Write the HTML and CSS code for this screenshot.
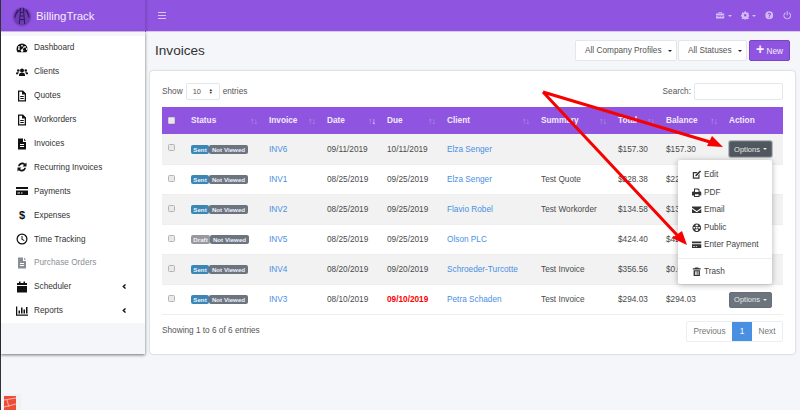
FILE: index.html
```html
<!DOCTYPE html>
<html>
<head>
    <title>BillingTrack - Invoices</title>
    <link rel="stylesheet" href="styles.css">
</head>
<body>
    <svg class="sprite" width="0" height="0">
        <symbol id="i-gauge" viewBox="0 0 24 24"><path fill-rule="evenodd" d="M12 3a11 11 0 0 0-11 11c0 2.400.8 4.700 2.100 6.500h17.800A11 11 0 0 0 23 14 11 11 0 0 0 12 3zm0 2.500a1.800 1.800 0 1 1 0 3.600 1.800 1.800 0 0 1 0-3.600zM6 8a1.800 1.800 0 1 1 0 3.600A1.800 1.800 0 0 1 6 8zm-2 6a1.800 1.800 0 1 1 0 .1zm14-6a1.800 1.800 0 1 1 0 3.600A1.800 1.800 0 0 1 18 8zm2 6a1.800 1.800 0 1 1 0 .1zM15.500 8.500l1.200.5-3 6.300a2.500 2.500 0 1 1-1.300-.6z"/></symbol>
        <symbol id="i-users" viewBox="0 0 24 24"><circle cx="12" cy="9" r="4"/><circle cx="4.500" cy="9" r="2.500"/><circle cx="19.500" cy="9" r="2.500"/><path d="M6 20v-2.500a4.500 4.500 0 0 1 4.500-4h3a4.500 4.500 0 0 1 4.500 4V20zM0 16.500V15a2.500 2.500 0 0 1 2.500-2.500H6a6 6 0 0 0-2 4zM24 16.500V15a2.500 2.500 0 0 0-2.500-2.500H18a6 6 0 0 1 2 4z"/></symbol>
        <symbol id="i-file" viewBox="0 0 24 24"><path fill-rule="evenodd" d="M4 1h10l6 6v16H4zm2.500 2.500v17h11V9H12V3.500zM8.500 12h7v2h-7zm0 4h7v2h-7z"/></symbol>
        <symbol id="i-filled" viewBox="0 0 24 24"><path fill-rule="evenodd" d="M4 1h10v7h6v15H4zm12 0l4 4.500h-4zM8 12v2h8v-2zm0 4v2h8v-2z"/></symbol>
        <symbol id="i-sync" viewBox="0 0 24 24"><path d="M4 10.500A8.500 8.500 0 0 1 18.300 5.400L21 3v8h-8l3-2.900A5.300 5.300 0 0 0 7.300 10.500zM20 13.500A8.500 8.500 0 0 1 5.700 18.600L3 21v-8h8l-3 2.900a5.300 5.300 0 0 0 8.700-2.400z"/></symbol>
        <symbol id="i-card" viewBox="0 0 24 24"><path fill-rule="evenodd" d="M0 4h24v4H0zm0 7h24v9H0zm3 4v2h5v-2zm7 0v2h3v-2z"/></symbol>
        <symbol id="i-clock" viewBox="0 0 24 24"><path fill-rule="evenodd" d="M12 1a11 11 0 1 0 0 22 11 11 0 0 0 0-22zm0 2.500a8.500 8.500 0 1 1 0 17 8.500 8.500 0 0 1 0-17zM11 6h2v6l4 2.500-1 1.700-5-3.100z"/></symbol>
        <symbol id="i-calendar" viewBox="0 0 24 24"><path d="M6 1h3v3h6V1h3v3h4v4H2V4h4zM2 10h20v13H2z"/></symbol>
        <symbol id="i-chart" viewBox="0 0 24 24"><path d="M0 3h2.500v16H24v2.500H0zM5 11h3v6H5zm5-6h3v12h-3zm5 4h3v8h-3zm5-5h3v13h-3z"/></symbol>
        <symbol id="i-chevron" viewBox="0 0 24 24"><path d="M16 2l4 4-7 6 7 6-4 4L5 12z"/></symbol>
        <symbol id="i-toolbox" viewBox="0 0 24 24"><path d="M8 3h8l1 4h7v6H0V7h7zm1.500 2l-.5 2h6l-.5-2zM0 15h7v2h3v-2h4v2h3v-2h7v6H0z"/></symbol>
        <symbol id="i-cog" viewBox="0 0 24 24"><path fill-rule="evenodd" d="M10 1h4l.6 3 2.200 1 2.600-1.700 2.800 2.800-1.700 2.600 1 2.200 3 .6v4l-3 .6-1 2.200 1.700 2.600-2.800 2.800-2.600-1.700-2.200 1-.6 3h-4l-.6-3-2.200-1-2.600 1.700-2.800-2.800 1.700-2.600-1-2.200-3-.6v-4l3-.6 1-2.200-1.700-2.600 2.800-2.800L7.200 5l2.200-1zM12 8.500a3.500 3.500 0 1 0 0 7 3.500 3.500 0 0 0 0-7z"/></symbol>
        <symbol id="i-help" viewBox="0 0 24 24"><path fill-rule="evenodd" d="M12 1a11 11 0 1 0 0 22 11 11 0 0 0 0-22zm-1.500 15.500h3v3h-3zm-3.500-7C7 7 9.200 5 12 5s5 1.800 5 4.300c0 3.200-3.500 3.200-3.500 5.700h-3c0-3.700 3.300-4 3.300-5.600 0-.9-.8-1.500-1.800-1.500-1.100 0-1.900.7-2 1.600z"/></symbol>
        <symbol id="i-power" viewBox="0 0 24 24"><path d="M10.500 1h3v11h-3zM7 3.500v3.300a7.800 7.800 0 1 0 10 0V3.500a10.800 10.800 0 1 1-10 0z"/></symbol>
        <symbol id="i-edit" viewBox="0 0 24 24"><path d="M2 5h12l-3 3H5v11h11v-6l3-3v12H2zM20 1l3 3-11 11-4 1 1-4z"/></symbol>
        <symbol id="i-print" viewBox="0 0 24 24"><path fill-rule="evenodd" d="M5 1h11l3 3v5h3l2 2v8h-5v4H5v-4H0v-8l2-2h3zm2.500 2.500V10h9V5h-2V3.500zm0 12.500v4.500h9V16z"/></symbol>
        <symbol id="i-mail" viewBox="0 0 24 24"><path d="M0 4h24v3l-12 8L0 7zM0 10l12 8 12-8v10H0z"/></symbol>
        <symbol id="i-globe" viewBox="0 0 24 24"><path fill-rule="evenodd" d="M12 1a11 11 0 1 0 0 22 11 11 0 0 0 0-22zM10 3.500C9 5 8.400 6.500 8.200 8h7.600C15.600 6.500 15 5 14 3.500zM3.800 10a8.500 8.500 0 0 0 0 4H8v-4zM10 10v4h4v-4zm6 0v4h4.200a8.500 8.500 0 0 0 0-4zM8.200 16c.2 1.500.8 3 1.800 4.500h4c1-1.500 1.600-3 1.800-4.500z"/></symbol>
        <symbol id="i-trash" viewBox="0 0 24 24"><path fill-rule="evenodd" d="M8 1h8l1 2h5v3H2V3h5zM4 8h16v15H4zm3.500 3v9h2v-9zm3.500 0v9h2v-9zm3.500 0v9h2v-9z"/></symbol>
    </svg>

    <div class="app">
        <header class="topbar">
            <div class="brand">
                <svg class="logo" viewBox="0 0 20 20">
                    <circle cx="10" cy="10" r="9.500" fill="#6d3bb4"/>
                    <path d="M7 19L8.500 1M13 19L11.500 1M7.600 14h4.800M8 10h4M8.300 6h3.400M8.500 2L2 9M11.500 2L18 9M5 3l-3 9M15 3l3 9" fill="none" stroke="#2a1650" stroke-width="1"/>
                </svg>
                <span class="brand-name">BillingTrack</span>
            </div>
            <div class="burger"><span></span><span></span><span></span></div>
            <div class="tools">
                <span class="tool"><svg class="ico"><use href="#i-toolbox"/></svg><i class="caret"></i></span>
                <span class="tool"><svg class="ico"><use href="#i-cog"/></svg><i class="caret"></i></span>
                <span class="tool"><svg class="ico"><use href="#i-help"/></svg></span>
                <span class="tool"><svg class="ico"><use href="#i-power"/></svg></span>
            </div>
        </header>

        <div class="content">
            <aside class="sidebar">
                <nav class="menu">
                    <a class="menu-item"><span class="menu-ico"><svg class="ico"><use href="#i-gauge"/></svg></span>Dashboard</a>
                    <a class="menu-item"><span class="menu-ico"><svg class="ico"><use href="#i-users"/></svg></span>Clients</a>
                    <a class="menu-item"><span class="menu-ico"><svg class="ico"><use href="#i-file"/></svg></span>Quotes</a>
                    <a class="menu-item"><span class="menu-ico"><svg class="ico"><use href="#i-file"/></svg></span>Workorders</a>
                    <a class="menu-item"><span class="menu-ico"><svg class="ico"><use href="#i-filled"/></svg></span>Invoices</a>
                    <a class="menu-item"><span class="menu-ico"><svg class="ico"><use href="#i-sync"/></svg></span>Recurring Invoices</a>
                    <a class="menu-item"><span class="menu-ico"><svg class="ico"><use href="#i-card"/></svg></span>Payments</a>
                    <a class="menu-item"><span class="menu-ico dollar">$</span>Expenses</a>
                    <a class="menu-item"><span class="menu-ico"><svg class="ico"><use href="#i-clock"/></svg></span>Time Tracking</a>
                    <a class="menu-item disabled"><span class="menu-ico"><svg class="ico"><use href="#i-filled"/></svg></span>Purchase Orders</a>
                    <a class="menu-item"><span class="menu-ico"><svg class="ico"><use href="#i-calendar"/></svg></span>Scheduler<svg class="chevron"><use href="#i-chevron"/></svg></a>
                    <a class="menu-item"><span class="menu-ico"><svg class="ico"><use href="#i-chart"/></svg></span>Reports<svg class="chevron"><use href="#i-chevron"/></svg></a>
                </nav>
            </aside>

            <main class="main">
                <div class="page-head">
                    <h1>Invoices</h1>
                    <div class="filters">
                        <div class="filter filter-company">All Company Profiles<i class="caret dark"></i></div>
                        <div class="filter filter-status">All Statuses<i class="caret dark"></i></div>
                        <button class="btn-new"><b>+</b> New</button>
                    </div>
                </div>

                <section class="card">
                    <div class="table-top">
                        <div class="length">Show <span class="length-select">10<span class="updown">&#9650;<br>&#9660;</span></span> entries</div>
                        <div class="search">Search: <span class="search-box"></span></div>
                    </div>

                    <table class="invoices">
                        <colgroup>
                            <col class="c-check"><col class="c-status"><col class="c-invoice"><col class="c-date"><col class="c-due"><col class="c-client"><col class="c-summary"><col class="c-total"><col class="c-balance"><col class="c-action">
                        </colgroup>
                        <thead>
                            <tr>
                                <th><span class="check head"></span></th>
                                <th>Status<span class="sort">&#8593;&#8595;</span></th>
                                <th>Invoice<span class="sort">&#8593;&#8595;</span></th>
                                <th>Date<span class="sort">&#8593;<em>&#8595;</em></span></th>
                                <th>Due<span class="sort">&#8593;&#8595;</span></th>
                                <th>Client<span class="sort">&#8593;&#8595;</span></th>
                                <th>Summary<span class="sort">&#8593;&#8595;</span></th>
                                <th>Total<span class="sort">&#8593;&#8595;</span></th>
                                <th>Balance<span class="sort">&#8593;&#8595;</span></th>
                                <th>Action</th>
                            </tr>
                        </thead>
                        <tbody>
                            <tr>
                                <td><span class="check"></span></td>
                                <td><span class="badge sent">Sent</span><span class="badge viewed">Not Viewed</span></td>
                                <td><a>INV6</a></td>
                                <td>09/11/2019</td>
                                <td>10/11/2019</td>
                                <td><a>Elza Senger</a></td>
                                <td></td>
                                <td>$157.30</td>
                                <td>$157.30</td>
                                <td class="action">
                                    <button class="btn-options focus">Options<i class="caret"></i></button>
                                    <div class="dropdown">
                                        <div class="drop-item"><svg class="ico"><use href="#i-edit"/></svg>Edit</div>
                                        <div class="drop-item"><svg class="ico"><use href="#i-print"/></svg>PDF</div>
                                        <div class="drop-item"><svg class="ico"><use href="#i-mail"/></svg>Email</div>
                                        <div class="drop-item"><svg class="ico"><use href="#i-globe"/></svg>Public</div>
                                        <div class="drop-item"><svg class="ico"><use href="#i-card"/></svg>Enter Payment</div>
                                        <div class="drop-line"></div>
                                        <div class="drop-item"><svg class="ico"><use href="#i-trash"/></svg>Trash</div>
                                    </div>
                                </td>
                            </tr>
                            <tr>
                                <td><span class="check"></span></td>
                                <td><span class="badge sent">Sent</span><span class="badge viewed">Not Viewed</span></td>
                                <td><a>INV1</a></td>
                                <td>08/25/2019</td>
                                <td>09/25/2019</td>
                                <td><a>Elza Senger</a></td>
                                <td>Test Quote</td>
                                <td>$228.38</td>
                                <td>$228.38</td>
                                <td class="action"><button class="btn-options"></button></td>
                            </tr>
                            <tr>
                                <td><span class="check"></span></td>
                                <td><span class="badge sent">Sent</span><span class="badge viewed">Not Viewed</span></td>
                                <td><a>INV2</a></td>
                                <td>08/25/2019</td>
                                <td>09/25/2019</td>
                                <td><a>Flavio Robel</a></td>
                                <td>Test Workorder</td>
                                <td>$134.58</td>
                                <td>$134.58</td>
                                <td class="action"><button class="btn-options"></button></td>
                            </tr>
                            <tr>
                                <td><span class="check"></span></td>
                                <td><span class="badge draft">Draft</span><span class="badge viewed">Not Viewed</span></td>
                                <td><a>INV5</a></td>
                                <td>08/25/2019</td>
                                <td>09/25/2019</td>
                                <td><a>Olson PLC</a></td>
                                <td></td>
                                <td>$424.40</td>
                                <td>$424.40</td>
                                <td class="action"><button class="btn-options"></button></td>
                            </tr>
                            <tr>
                                <td><span class="check"></span></td>
                                <td><span class="badge sent">Sent</span><span class="badge viewed">Not Viewed</span></td>
                                <td><a>INV4</a></td>
                                <td>08/20/2019</td>
                                <td>09/20/2019</td>
                                <td><a>Schroeder-Turcotte</a></td>
                                <td>Test Invoice</td>
                                <td>$356.56</td>
                                <td>$0.00</td>
                                <td class="action"><button class="btn-options"></button></td>
                            </tr>
                            <tr>
                                <td><span class="check"></span></td>
                                <td><span class="badge sent">Sent</span><span class="badge viewed">Not Viewed</span></td>
                                <td><a>INV3</a></td>
                                <td>08/10/2019</td>
                                <td class="overdue">09/10/2019</td>
                                <td><a>Petra Schaden</a></td>
                                <td>Test Invoice</td>
                                <td>$294.03</td>
                                <td>$294.03</td>
                                <td class="action"><button class="btn-options">Options<i class="caret"></i></button></td>
                            </tr>
                        </tbody>
                    </table>

                    <div class="table-bottom">
                        <div class="info">Showing 1 to 6 of 6 entries</div>
                        <div class="pager">
                            <span class="page prev">Previous</span>
                            <span class="page current">1</span>
                            <span class="page next">Next</span>
                        </div>
                    </div>
                </section>
            </main>
        </div>

        <!-- hand drawn annotation over the page -->
        <svg class="arrows" viewBox="0 0 800 410">
            <path d="M543 92L710 142M543 92L677 235" fill="none" stroke="#f70000" stroke-width="3"/>
            <polygon points="723,147 707,146 712,136" fill="#f70000"/>
            <polygon points="687,245 672,238 682,231" fill="#f70000"/>
        </svg>

        <div class="corner-app">
            <svg viewBox="0 0 12 14">
                <rect width="12" height="14" fill="#ee4b38"/>
                <path d="M0 4L12 2M3 4l2 7M0 11l12-3" fill="none" stroke="#fbd0c8" stroke-width=".8"/>
            </svg>
        </div>
    </div>
</body>
</html>
```

FILE: styles.css
```css
* {
    box-sizing: border-box;
}

html, body {
    margin: 0;
    padding: 0;
}

body {
    width: 800px;
    height: 410px;
    overflow: hidden;
    font-family: "Liberation Sans", Arial, sans-serif;
    font-size: 8.25px;
    color: #212529;
    background-color: #f4f6f9;
}

.sprite {
    position: absolute;
}

.app {
    position: relative;
    width: 800px;
    height: 410px;
    border-left: 1px solid #333;
    background-color: #f4f6f9;
}

/* top bar */
.topbar {
    display: flex;
    align-items: center;
    height: 32px;
    background-color: #9055e0;
    border-bottom: 1px solid #d9c8f3;
}

.brand {
    display: flex;
    align-items: center;
    gap: 5px;
    width: 145px;
    height: 32px;
    padding-left: 12px;
    border-right: 1px solid #8049cc;
    box-shadow: 1px 0 2px rgba(0, 0, 0, .15);
}

.logo {
    width: 18px;
    height: 18px;
    filter: drop-shadow(0 1px 1px rgba(40, 10, 90, .5));
}

.brand-name {
    font-size: 11.4px;
    color: #f4eefd;
}

.burger {
    display: flex;
    flex-direction: column;
    gap: 1.500px;
    width: 8px;
    margin-left: 12px;
}

.burger span {
    height: 1.500px;
    background-color: #d9c6f6;
}

.tools {
    display: flex;
    align-items: center;
    margin-left: auto;
    margin-right: 9px;
    color: #d3bdf4;
}

.tool {
    display: flex;
    align-items: center;
    gap: 3px;
    margin-left: 9px;
}

.tool .ico {
    width: 8.500px;
    height: 8.500px;
}

.ico {
    width: 11px;
    height: 11px;
    fill: currentColor;
}

.caret {
    display: inline-block;
    border-top: 2.500px solid currentColor;
    border-left: 2.500px solid transparent;
    border-right: 2.500px solid transparent;
}

.caret.dark {
    border-top-color: #222;
}

/* sidebar */
.content {
    display: flex;
    align-items: flex-start;
}

.sidebar {
    width: 145px;
    height: 322px;
    padding-top: 4px;
    background-color: #f4f6f9;
    box-shadow: 0 1px 3px rgba(0, 0, 0, .55);
}

.menu {
    background-color: #fff;
}

.menu-item {
    display: flex;
    align-items: center;
    height: 23.900px;
    padding-left: 15px;
    padding-right: 18px;
    color: #333;
}

.menu-ico {
    display: flex;
    justify-content: center;
    width: 12px;
    margin-right: 6px;
    color: #111;
}

.menu-ico .ico {
    width: 12px;
    height: 12px;
}

.dollar {
    font-size: 11px;
    font-weight: bold;
}

.menu-item.disabled {
    color: #8a8f96;
}

.menu-item.disabled .menu-ico {
    color: #8a8f96;
}

.chevron {
    width: 6px;
    height: 7px;
    margin-left: auto;
    fill: #111;
}

/* page */
.main {
    flex: 1;
    padding: 8px 5px 0 5px;
}

.page-head {
    display: flex;
    align-items: center;
    justify-content: space-between;
    height: 21px;
    padding: 0 5px;
    margin-bottom: 10px;
}

h1 {
    margin: 0;
    font-size: 13.600px;
    font-weight: normal;
    color: #333;
}

.filters {
    display: flex;
    align-items: center;
}

.filter {
    display: flex;
    align-items: center;
    justify-content: space-between;
    height: 21px;
    padding: 0 4px 0 9px;
    color: #555;
    background-color: #fff;
    border: 1px solid #e3e6ea;
    border-radius: 2px;
}

.filter-company {
    width: 102px;
    margin-right: 1px;
}

.filter-status {
    width: 69px;
    margin-right: 2px;
}

.btn-new {
    width: 41px;
    height: 21px;
    padding: 0;
    font-family: inherit;
    font-size: 8.250px;
    color: #f4eefd;
    background-color: #9055e0;
    border: 1px solid #7a44c6;
    border-radius: 2px;
}

.btn-new b {
    font-size: 14px;
    line-height: 8px;
}

.card {
    height: 283px;
    padding: 12px;
    background-color: #fff;
    border-radius: 3px;
    box-shadow: 0 0 2px rgba(0, 0, 0, .3);
}

.table-top {
    display: flex;
    align-items: center;
    justify-content: space-between;
    height: 16px;
    margin-bottom: 8px;
    color: #555;
}

.length {
    display: flex;
    align-items: center;
    gap: 3px;
}

.length-select {
    display: flex;
    align-items: center;
    justify-content: space-between;
    width: 34px;
    height: 17px;
    padding: 0 6px;
    font-size: 7.500px;
    border: 1px solid #e3e6ea;
    border-radius: 2px;
}

.updown {
    font-size: 4px;
    line-height: 3.500px;
    color: #333;
}

.search {
    display: flex;
    align-items: center;
    gap: 3px;
}

.search-box {
    display: block;
    width: 89px;
    height: 17px;
    border: 1px solid #e3e6ea;
    border-radius: 2px;
}

/* table */
.invoices {
    width: 621px;
    table-layout: fixed;
    border-collapse: collapse;
}

.c-check { width: 23px; }
.c-status { width: 78px; }
.c-invoice { width: 58px; }
.c-date { width: 60px; }
.c-due { width: 60px; }
.c-client { width: 94px; }
.c-summary { width: 77px; }
.c-total { width: 48px; }
.c-balance { width: 63px; }
.c-action { width: 60px; }

.invoices th {
    height: 27px;
    padding: 0 6px;
    font-weight: bold;
    text-align: left;
    color: #f2ebfc;
    background-color: #9055e0;
}

.invoices td {
    height: 30px;
    padding: 1px 6px 0;
    color: #4a4a4a;
    border-bottom: 1px solid #eee;
}

.invoices tbody tr:nth-child(odd) td {
    background-color: #f2f2f2;
}

.invoices a {
    color: #4a90e2;
}

.invoices td.overdue {
    font-weight: bold;
    color: #f00;
}

.sort {
    float: right;
    font-size: 9px;
    font-weight: normal;
    letter-spacing: -1px;
    color: #b797ec;
}

.sort em {
    font-style: normal;
    color: #f2ebfc;
}

.check {
    display: block;
    width: 7px;
    height: 7px;
    margin-bottom: 3px;
    background-color: #e9e9e9;
    border: 1px solid #b5b5b5;
    border-radius: 1.500px;
}

.check.head {
    margin-bottom: 1px;
    background-color: #e8e8e8;
    border-color: #ccc;
    border-radius: 1px;
}

.badge {
    display: inline-block;
    height: 9px;
    font-size: 6.200px;
    font-weight: bold;
    line-height: 9px;
    text-align: center;
    vertical-align: middle;
    color: #eef;
    border-radius: 2px;
}

.sent {
    width: 18px;
    background-color: #3b87b3;
}

.draft {
    width: 19px;
    background-color: #999;
}

.viewed {
    width: 39px;
    background-color: #6c757d;
}

.action {
    position: relative;
}

.btn-options {
    display: flex;
    align-items: center;
    justify-content: center;
    gap: 3px;
    width: 43px;
    height: 16px;
    padding: 0;
    font-family: inherit;
    font-size: 7.500px;
    color: #e8eaec;
    background-color: #6c757d;
    border: 1px solid #666e76;
    border-radius: 2px;
}

.btn-options.focus {
    background-color: #50575e;
    box-shadow: 0 0 0 1px #b4b9bd;
}

.dropdown {
    position: absolute;
    top: 26px;
    left: -45px;
    z-index: 2;
    width: 94px;
    height: 124px;
    padding-top: 6px;
    background-color: #fff;
    border-radius: 2px;
    box-shadow: 0 1px 6px rgba(0, 0, 0, .3);
}

.drop-item {
    display: flex;
    align-items: center;
    gap: 2.500px;
    height: 17.500px;
    padding-left: 14px;
    color: #444;
}

.drop-item .ico {
    width: 9.500px;
    height: 9.500px;
    fill: #333;
}

.drop-line {
    height: 1px;
    margin: 4px 0 4px;
    background-color: #eee;
}

/* bottom of the card */
.table-bottom {
    display: flex;
    align-items: center;
    justify-content: space-between;
    margin-top: 6px;
    color: #555;
}

.info {
    padding-bottom: 1px;
}

.pager {
    display: flex;
    height: 21px;
    border: 1px solid #eceef1;
    border-radius: 2px;
}

.page {
    display: flex;
    align-items: center;
    justify-content: center;
    color: #777;
}

.prev {
    width: 45px;
}

.current {
    width: 20px;
    color: #fff;
    background-color: #4a90e2;
}

.next {
    width: 30px;
}

/* overlays */
.arrows {
    position: absolute;
    top: 0;
    left: -1px;
    z-index: 3;
    width: 800px;
    height: 410px;
    pointer-events: none;
}

.corner-app {
    position: absolute;
    top: 394px;
    left: 2px;
    width: 18px;
    height: 16px;
    padding: 2px 0 0 1px;
    background-color: #f1f1f1;
}

.corner-app svg {
    display: block;
    width: 12px;
    height: 14px;
}
```
